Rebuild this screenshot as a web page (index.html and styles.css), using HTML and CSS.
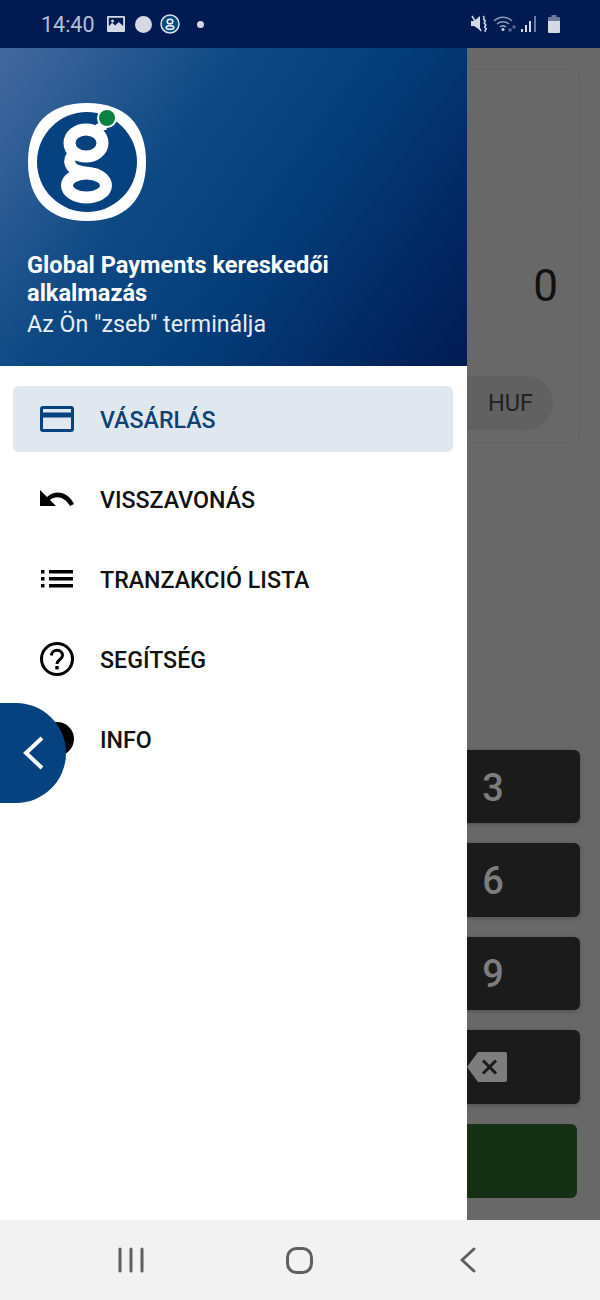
FILE: index.html
```html
<!DOCTYPE html>
<html lang="en">
<head>
    <meta charset="UTF-8">
    <meta name="viewport" content="width=device-width, initial-scale=1.0">
    <title>Global Payments</title>
    <link rel="stylesheet" href="styles.css">
</head>
<body>
    <div class="phone">
        <div class="status-bar">
            <span class="time">14:40</span>
            <svg class="st-image" width="18" height="16" viewBox="0 0 18 16">
                <path fill="#d5d9e6" fill-rule="evenodd" d="M1 0h16a1 1 0 0 1 1 1v14a1 1 0 0 1-1 1H1a1 1 0 0 1-1-1V1a1 1 0 0 1 1-1zm.8 1.800v8.400l3.400-3.400 3 2.600 3.600-3.400 4.400 4V1.800z"/>
                <circle cx="5.500" cy="5" r="1.500" fill="#d5d9e6"/>
            </svg>
            <span class="st-circle"></span>
            <svg class="st-app" width="20" height="20" viewBox="0 0 20 20">
                <circle cx="10" cy="10" r="9" fill="#0b4a78" stroke="#d5e2ea" stroke-width="1.500"/>
                <ellipse cx="10" cy="7.500" rx="2.800" ry="2.300" fill="none" stroke="#e6edf2" stroke-width="1.600"/>
                <ellipse cx="10" cy="13.500" rx="3.800" ry="1.900" fill="none" stroke="#e6edf2" stroke-width="1.600"/>
            </svg>
            <span class="st-dot"></span>
            <span class="st-right">
                <svg width="18" height="18" viewBox="0 0 18 18">
                    <path fill="#d5d9e6" d="M0 6h3l6-5v14L3 11H0z"/>
                    <path fill="none" stroke="#d5d9e6" stroke-width="1.500" d="M1 1l9 15M12 1c3 2-1 3 1.500 4s-2 3 .5 4-2 3 .5 4-2 2 0 4"/>
                </svg>
                <svg class="st-wifi" width="24" height="18" viewBox="0 0 24 18">
                    <g fill="none" stroke="#8f9ab8" stroke-width="1.500">
                        <path d="M1 6c5-5 13-5 18 0"/>
                        <path d="M4 9c3.500-3 8.500-3 12 0"/>
                        <path d="M7 12c2-1.500 4-1.500 6 0"/>
                    </g>
                    <circle cx="10" cy="14.500" r="1.500" fill="#d5d9e6"/>
                    <circle cx="17" cy="15" r="1.800" fill="#5b6788"/>
                    <circle cx="21" cy="12" r="1.800" fill="#5b6788"/>
                </svg>
                <svg class="st-signal" width="16" height="18" viewBox="0 0 16 18">
                    <rect x="0" y="14" width="2" height="3" fill="#d5d9e6"/>
                    <rect x="4" y="10" width="2" height="7" fill="#d5d9e6"/>
                    <rect x="8" y="6" width="2" height="11" fill="#d5d9e6"/>
                    <rect x="13" y="1" width="2" height="16" fill="#6f7b9a"/>
                </svg>
                <svg class="st-battery" width="12" height="18" viewBox="0 0 12 18">
                    <path fill="#6f7b9a" d="M3.500 0h5v2H11a1 1 0 0 1 1 1v3H0V3a1 1 0 0 1 1-1h2.500z"/>
                    <path fill="#d5d9e6" d="M0 6h12v11a1 1 0 0 1-1 1H1a1 1 0 0 1-1-1z"/>
                </svg>
            </span>
        </div>

        <div class="main">
            <!-- app screen behind the drawer -->
            <div class="screen">
                <div class="amount-card">
                    <div class="card-top"></div>
                    <div class="amount">0</div>
                    <div class="currency">HUF</div>
                </div>
                <div class="keypad">
                    <div class="key">3</div>
                    <div class="key">6</div>
                    <div class="key">9</div>
                    <div class="key">
                        <svg class="key-back" width="40" height="30" viewBox="0 0 40 30">
                            <path fill="#7d7d7d" d="M11 0h27a2 2 0 0 1 2 2v26a2 2 0 0 1-2 2H11L0 15z"/>
                            <path fill="none" stroke="#1c1c1c" stroke-width="3" d="M16 8.500l13 13M29 8.500l-13 13"/>
                        </svg>
                    </div>
                    <div class="key-ok"></div>
                </div>
            </div>

            <!-- Drawer -->
            <div class="drawer">
                <div class="drawer-head">
                    <svg class="logo" width="118" height="118" viewBox="0 0 118 118">
                        <path fill="#fff" d="M59 0C97 0 118 21 118 59C118 97 97 118 59 118C21 118 0 97 0 59C0 21 21 0 59 0z"/>
                        <circle cx="59" cy="59" r="50" fill="#05427f"/>
                        <g fill="none" stroke="#fff">
                            <ellipse cx="58" cy="40" rx="16.500" ry="13.500" stroke-width="12"/>
                            <ellipse cx="58.500" cy="82.500" rx="19.500" ry="12" stroke-width="12"/>
                            <path stroke-width="11" d="M46 50C38 58 42 66 52 68C60 70 70 69 76 76"/>
                            <path stroke-width="9" d="M66 30C70 25 73 23 78 22"/>
                        </g>
                        <circle cx="79" cy="15" r="10" fill="#fff"/>
                        <circle cx="79" cy="15" r="8" fill="#0b8043"/>
                    </svg>
                    <div class="head-title">Global Payments kereskedői alkalmazás</div>
                    <div class="head-sub">Az Ön "zseb" terminálja</div>
                </div>
                <ul class="menu">
                    <li class="menu-item active">
                        <svg width="34" height="26" viewBox="0 0 34 26">
                            <path fill="#05427f" fill-rule="evenodd" d="M3 0h28a3 3 0 0 1 3 3v20a3 3 0 0 1-3 3H3a3 3 0 0 1-3-3V3a3 3 0 0 1 3-3zm0 3v3.500h28V3zm0 8.500V23h28V11.500z"/>
                        </svg>
                        <span>VÁSÁRLÁS</span>
                    </li>
                    <li class="menu-item">
                        <svg width="34" height="18" viewBox="0 0 34 18">
                            <path fill="#000" d="M0 0v16h16l-6-6c6-5 15-3 20 6l4-2C28 2 16-1 7 7z"/>
                        </svg>
                        <span>VISSZAVONÁS</span>
                    </li>
                    <li class="menu-item">
                        <svg width="34" height="18" viewBox="-1 0 34 18">
                            <path fill="#000" d="M0 0h3.500v3.500H0zM8 0h24v3.500H8zM0 7h3.500v3.500H0zM8 7h24v3.500H8zM0 14h3.500v3.500H0zM8 14h24v3.500H8z"/>
                        </svg>
                        <span>TRANZAKCIÓ LISTA</span>
                    </li>
                    <li class="menu-item">
                        <svg width="34" height="34" viewBox="0 0 34 34">
                            <circle cx="17" cy="17" r="15.500" fill="none" stroke="#000" stroke-width="3"/>
                            <path fill="none" stroke="#000" stroke-width="3" d="M11.500 13.500c0-7 11-7 11 0 0 4-5.500 4-5.500 8.500"/>
                            <rect x="15.300" y="24" width="3.400" height="3.400" fill="#000"/>
                        </svg>
                        <span>SEGÍTSÉG</span>
                    </li>
                    <li class="menu-item">
                        <svg width="34" height="34" viewBox="0 0 34 34">
                            <circle cx="17" cy="17" r="17" fill="#000"/>
                        </svg>
                        <span>INFO</span>
                    </li>
                </ul>
            </div>

            <div class="drawer-toggle">
                <svg width="24" height="36" viewBox="0 0 24 36">
                    <path fill="none" stroke="#fff" stroke-width="4" d="M20 3L4 18l16 15"/>
                </svg>
            </div>
        </div>

        <div class="nav-bar">
            <svg width="26" height="26" viewBox="0 0 26 26">
                <path fill="none" stroke="#5f5f5f" stroke-width="3" stroke-linecap="round" d="M2 2v22M13 2v22M24 2v22"/>
            </svg>
            <svg class="nav-home" width="27" height="27" viewBox="0 0 27 27">
                <rect x="1.500" y="1.500" width="24" height="24" rx="9" fill="none" stroke="#5f5f5f" stroke-width="3"/>
            </svg>
            <svg width="16" height="26" viewBox="0 0 16 26">
                <path fill="none" stroke="#5f5f5f" stroke-width="3" stroke-linecap="round" stroke-linejoin="round" d="M14 2L2 13l12 11"/>
            </svg>
        </div>
    </div>
</body>
</html>
```

FILE: styles.css
```css
* {
    box-sizing: border-box;
}

body {
    font-family: 'Roboto', sans-serif;
    margin: 0;
    padding: 0;
    background-color: #fff;
}

.phone {
    width: 600px;
    height: 1300px;
    display: flex;
    flex-direction: column;
    overflow: hidden;
}

/* Status bar */
.status-bar {
    height: 48px;
    flex: none;
    display: flex;
    align-items: center;
    padding-left: 41px;
    background-color: #011a52;
}

.time {
    font-size: 21.5px;
    color: #b4bed4;
    width: 66px;
}

.st-image {
    margin-right: 10px;
}

.st-circle {
    width: 17px;
    height: 17px;
    border-radius: 50%;
    background-color: #d5d9e6;
    margin-right: 8px;
}

.st-dot {
    width: 7px;
    height: 7px;
    border-radius: 50%;
    background-color: #d5d9e6;
    margin-left: 17px;
}

.st-right {
    display: flex;
    align-items: center;
    margin-left: auto;
    padding-right: 40px;
}

.st-wifi {
    margin-left: 4px;
}

.st-signal {
    margin-left: 4px;
}

.st-battery {
    margin-left: 11px;
}

/* Main area */
.main {
    position: relative;
    flex: 1;
    overflow: hidden;
}

.screen {
    height: 100%;
    padding: 20px 20px 0;
    background-color: #686868;
}

.amount-card {
    height: 376px;
    border: 1px solid #636363;
    border-radius: 8px;
    display: flex;
    flex-direction: column;
    align-items: flex-end;
}

.card-top {
    height: 137px;
    width: 100%;
    border-bottom: 1px solid #646464;
}

.amount {
    font-size: 44px;
    color: #111;
    line-height: 52px;
    margin-top: 54px;
    margin-right: 21px;
}

.currency {
    width: 180px;
    height: 54px;
    margin-top: 64px;
    margin-right: 26px;
    border-radius: 27px;
    background-color: #616161;
    color: #222;
    font-size: 23.5px;
    display: flex;
    align-items: center;
    justify-content: flex-end;
    padding-right: 20px;
}

.keypad {
    width: 174px;
    margin-left: auto;
    margin-top: 306px;
    display: flex;
    flex-direction: column;
    gap: 20px;
}

.key {
    height: 73.4px;
    border-radius: 6px;
    background-color: #1b1b1b;
    box-shadow: 0 1px 4px rgba(0, 0, 0, 0.25);
    color: #7d7d7d;
    font-size: 38px;
    font-weight: 500;
    display: flex;
    align-items: center;
    justify-content: center;
    padding-top: 2px;
}

.key-back {
    margin-right: 12px;
    margin-bottom: 2px;
}

.key-ok {
    height: 74px;
    width: 171px;
    border-radius: 6px;
    background-color: #153014;
}

/* Drawer */
.drawer {
    position: absolute;
    left: 0;
    top: 0;
    bottom: 0;
    width: 467px;
    background-color: #fff;
}

.drawer-head {
    height: 318px;
    padding: 55px 27px 0;
    background: linear-gradient(125deg, #44699f 0%, #0e4984 35%, #043c78 60%, #011a52 100%);
    color: #fff;
}

.logo {
    display: block;
    margin-left: 1px;
    margin-bottom: 30px;
}

.head-title {
    font-size: 23.6px;
    font-weight: 700;
    line-height: 28px;
}

.head-sub {
    font-size: 23.2px;
    line-height: 34px;
    color: #e8edf4;
}

.menu {
    list-style: none;
    margin: 0;
    padding: 20px 14px 0 13px;
}

.menu-item {
    height: 66px;
    margin-bottom: 14px;
    padding-left: 27px;
    border-radius: 6px;
    display: flex;
    align-items: center;
    font-size: 23.2px;
    font-weight: 500;
    color: #111;
}

.menu-item svg {
    flex: none;
    margin-right: 26px;
}

.menu-item span {
    padding-top: 2px;
}

.menu-item.active {
    background-color: #e0e7ef;
    color: #0d4274;
}

.drawer-toggle {
    position: absolute;
    left: 0;
    top: 655px;
    width: 66px;
    height: 100px;
    border-radius: 0 50px 50px 0;
    background-color: #05427f;
    display: flex;
    align-items: center;
    justify-content: flex-end;
    padding-right: 20px;
}

/* Bottom navigation */
.nav-bar {
    height: 80px;
    flex: none;
    display: flex;
    align-items: center;
    justify-content: space-between;
    padding: 0 124px 0 118px;
    background-color: #f2f2f2;
}

.nav-home {
    margin-right: 5px;
}
```
